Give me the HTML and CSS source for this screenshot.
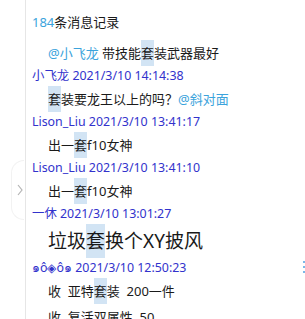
FILE: index.html
```html
<!DOCTYPE html>
<html>
	<head>
		<meta charset="utf-8"/>
		<title>消息记录</title>
		<link rel="stylesheet" href="styles.css">
	</head>
	<body>
		<div class="window">
			<aside class="rail">
				<div class="handle">
					<svg width="6" height="12" viewBox="0 0 6 12">
						<polyline points="1,1 5,6 1,11" fill="none" stroke="#b4b4b4" stroke-width="1.2"/>
					</svg>
				</div>
			</aside>
			<main class="history">
				<div class="count"><span class="num">184</span>条消息记录</div>

				<div class="msg"><span class="at">@小飞龙</span> 带技能<span class="hit">套</span>装武器最好</div>

				<div class="head">小飞龙 2021/3/10 14:14:38</div>
				<div class="msg"><span class="hit">套</span>装要龙王以上的吗？<span class="at">@斜对面</span></div>

				<div class="head">Lison_Liu 2021/3/10 13:41:17</div>
				<div class="msg">出一<span class="hit">套</span>f10女神</div>

				<div class="head">Lison_Liu 2021/3/10 13:41:10</div>
				<div class="msg">出一<span class="hit">套</span>f10女神</div>

				<div class="head">一休 2021/3/10 13:01:27</div>
				<div class="msg big">垃圾<span class="hit">套</span>换个XY披风</div>

				<div class="head">
					<span>๑ô◈ô๑ 2021/3/10 12:50:23</span>
					<span class="edge"><i></i><i></i><i></i></span>
				</div>
				<div class="msg">收&nbsp; 亚特<span class="hit">套</span>装&nbsp; 200一件</div>
				<div class="msg">收&nbsp; 复活双属性&nbsp; 50</div>
			</main>
		</div>
	</body>
</html>
```

FILE: styles.css
```css
html, body {
	margin: 0;
	height: 100%;
	overflow: hidden;
	background-color: #ffffff;
}
body {
	font-family: "Noto Sans", "Noto Sans CJK SC", sans-serif;
	font-size: 13px;
	color: #1a1a1a;
}
.window {
	display: flex;
	height: 100%;
}
.rail {
	width: 25px;
	flex: none;
	padding-top: 160px;
	box-sizing: border-box;
}
.handle {
	margin-left: 11px;
	width: 13px;
	height: 60px;
	border: 1px solid #f2f2f2;
	border-right: none;
	border-radius: 30px 0 0 30px;
	display: flex;
	align-items: center;
	justify-content: center;
	box-sizing: border-box;
	padding-left: 3px;
}
.history {
	flex: 1;
	border-left: 1px solid #e6e6e6;
	padding-left: 6px;
	min-width: 0;
}
.count {
	margin-top: 12px;
	margin-bottom: 8px;
	line-height: 20px;
}
.num {
	color: #3ba3dc;
}
.head {
	font-size: 12.4px;
	line-height: 20px;
	height: 20px;
	color: #3232cc;
	display: flex;
	white-space: nowrap;
}
.msg {
	line-height: 26px;
	height: 26px;
	padding-left: 16px;
	white-space: nowrap;
}
.msg.big {
	font-size: 19px;
	line-height: 34px;
	height: 34px;
}
.at {
	color: #3ba3dc;
}
.hit {
	display: inline-block;
	background-color: #d2e4f4;
}
.edge {
	margin-left: auto;
	margin-right: -8px;
	display: flex;
	flex-direction: column;
	gap: 3px;
	padding-top: 3px;
}
.edge i {
	display: block;
	width: 10px;
	height: 2px;
	background-color: #7bb8e8;
}
```
